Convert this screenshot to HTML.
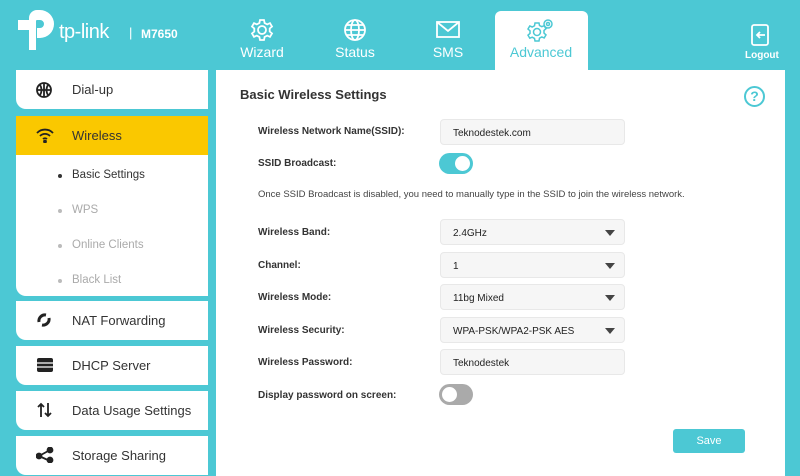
<!DOCTYPE html>
<html><head><meta charset="utf-8"><style>
*{margin:0;padding:0;box-sizing:border-box}
body{width:800px;height:476px;background:#4cc8d4;font-family:"Liberation Sans",sans-serif;position:relative;overflow:hidden;color:#333}
.abs{position:absolute}
.nav{position:absolute;top:18px;width:90px;text-align:center;color:#fff;font-size:14px}
.nav svg{display:block;margin:0 auto 2px}
.side{position:absolute;left:16px;width:192px;background:#fff;border-radius:0 0 0 10px;font-size:13px;color:#333}
.side .t{position:absolute;left:56px;top:12px}
.side .ic{position:absolute;left:20px;top:11px}
.sub{position:absolute;left:56px;font-size:11.5px;color:#aaa}
.sub:before{content:"";position:absolute;left:-14px;top:5px;width:4px;height:4px;border-radius:50%;background:#bbb}
.side .sub:first-child:before{background:#333}
.lbl{position:absolute;left:258px;font-size:10px;font-weight:bold;color:#333}
.fld{position:absolute;left:440px;width:185px;height:26px;background:#f6f6f6;border:1px solid #e8e8e8;border-radius:4px;font-size:10px;color:#222;padding:8px 0 0 12px}
.fld.s:after{content:"";position:absolute;right:9px;top:10px;border-left:5px solid transparent;border-right:5px solid transparent;border-top:6px solid #444}
.tg{position:absolute;left:439px;width:34px;height:21px;border-radius:11px}
.tg i{position:absolute;top:3px;width:15px;height:15px;border-radius:50%;background:#fff}
</style></head><body>
<!-- logo -->
<svg class="abs" style="left:15px;top:10px" width="42" height="42" viewBox="0 0 42 42"><path d="M14 40V20H3V10h11V8a8 8 0 0 1 8-8 h3a14 14 0 0 1 0 28h-3V18h3a4 4 0 0 0 0-8h-3a1 1 0 0 0-1 1v29z" fill="#fff"/></svg>
<div class="abs" style="left:59px;top:21px;color:#fff;font-size:20px;letter-spacing:-0.5px">tp-link</div>
<div class="abs" style="left:129px;top:25px;color:#fff;font-size:13px">|</div>
<div class="abs" style="left:141px;top:27px;color:#fff;font-size:12px;font-weight:bold">M7650</div>
<!-- nav -->
<div class="nav" style="left:217px"><svg width="24" height="24" viewBox="0 0 24 24" fill="none" stroke="#fff" stroke-width="1.8"><circle cx="12" cy="12" r="4"/><path d="M10 2h4l.6 3 2.6 1.4 2.8-1.3 2 3.4-2.3 2 0 3 2.3 2-2 3.4-2.8-1.3-2.6 1.4-.6 3h-4l-.6-3-2.6-1.4-2.8 1.3-2-3.4 2.3-2v-3l-2.3-2 2-3.4 2.8 1.3 2.6-1.4z"/></svg>Wizard</div>
<div class="nav" style="left:310px"><svg width="24" height="24" viewBox="0 0 24 24" fill="none" stroke="#fff" stroke-width="1.8"><circle cx="12" cy="12" r="10"/><ellipse cx="12" cy="12" rx="4" ry="10"/><path d="M2 12h20M4 7h16M4 17h16"/></svg>Status</div>
<div class="nav" style="left:403px"><svg width="24" height="24" viewBox="0 0 24 24" fill="none" stroke="#fff" stroke-width="1.8"><rect x="1" y="4" width="22" height="15"/><path d="M1 4l11 9 11-9"/></svg>SMS</div>
<div class="abs" style="left:495px;top:11px;width:93px;height:60px;background:#fff;border-radius:6px 6px 0 0"></div>
<div class="nav" style="left:496px;color:#4cc8d4"><svg width="30" height="24" viewBox="0 0 30 24" fill="none" stroke="#4cc8d4" stroke-width="1.5"><circle cx="11" cy="14" r="3.5"/><path d="M9 5h4l.5 2.5 2.3 1.2 2.4-1 1.8 3-2 1.8v2.6l2 1.8-1.8 3-2.4-1-2.3 1.2L13 23H9l-.5-2.6-2.3-1.2-2.4 1-1.8-3 2-1.8v-2.6l-2-1.8 1.8-3 2.4 1 2.3-1.2z"/><circle cx="22" cy="6" r="4"/><circle cx="22" cy="6" r="1.5"/></svg>Advanced</div>
<div class="abs" style="left:745px;top:24px;width:30px;text-align:center;color:#fff;font-size:10px;font-weight:bold"><svg width="20" height="22" viewBox="0 0 20 22" fill="none" stroke="#fff" stroke-width="1.8" style="display:block;margin:0 auto 4px"><rect x="2" y="1" width="16" height="20" rx="2"/><path d="M15 11H7M10 8l-3 3 3 3"/></svg>Logout</div>
<!-- sidebar -->
<div class="side" style="top:70px;height:39px"><svg class="ic" width="18" height="18" viewBox="0 0 18 18" fill="none" stroke="#222" stroke-width="1.8"><circle cx="8" cy="9" r="7"/><path d="M1 9h14M8 2v14M4 4c2 3 2 7 0 10M12 4c-2 3-2 7 0 10"/></svg><span class="t">Dial-up</span></div>
<div class="side" style="top:116px;height:39px;background:#fac800;border-radius:0"><svg class="ic" width="18" height="16" viewBox="0 0 18 16" fill="none" stroke="#222" stroke-width="1.8"><path d="M1 6a11 11 0 0 1 16 0M4 9a7 7 0 0 1 10 0M7 12a3 3 0 0 1 4 0"/><circle cx="9" cy="14.5" r="1" fill="#222"/></svg><span class="t">Wireless</span></div>
<div class="side" style="top:155px;height:141px">
<div class="sub" style="top:14px;color:#333">Basic Settings</div>
<div class="sub" style="top:49px">WPS</div>
<div class="sub" style="top:84px">Online Clients</div>
<div class="sub" style="top:119px">Black List</div></div>
<div class="side" style="top:301px;height:39px"><svg class="ic" width="16" height="16" viewBox="0 0 16 16" fill="none" stroke="#222" stroke-width="3"><path d="M3 10a6 6 0 0 1 7-7M13 6a6 6 0 0 1-7 7"/></svg><span class="t">NAT Forwarding</span></div>
<div class="side" style="top:346px;height:39px"><svg class="ic" width="18" height="16" viewBox="0 0 18 16"><rect x="1" y="1" width="16" height="14" rx="2" fill="#222"/><path d="M1 6h16M1 10h16" stroke="#fff" stroke-width="1.2"/></svg><span class="t">DHCP Server</span></div>
<div class="side" style="top:391px;height:39px"><svg class="ic" width="18" height="16" viewBox="0 0 18 16" fill="none" stroke="#222" stroke-width="1.8"><path d="M5 15V2M2 5l3-3 3 3M12 1v13M9 11l3 3 3-3"/></svg><span class="t">Data Usage Settings</span></div>
<div class="side" style="top:436px;height:39px"><svg class="ic" width="18" height="16" viewBox="0 0 18 16" fill="#222" stroke="#222" stroke-width="1.8"><path d="M3 9l11-6M3 9l11 5" fill="none"/><circle cx="3" cy="9" r="2.5"/><circle cx="14" cy="3" r="2.5"/><circle cx="14" cy="13" r="2.5"/></svg><span class="t">Storage Sharing</span></div>
<!-- content -->
<div class="abs" style="left:216px;top:70px;width:569px;height:406px;background:#fff"></div>
<div class="abs" style="left:240px;top:87px;font-size:13px;font-weight:bold;color:#333">Basic Wireless Settings</div>
<div class="abs" style="left:744px;top:86px;width:21px;height:21px;border:2px solid #4cc8d4;border-radius:50%;color:#4cc8d4;font-size:14px;font-weight:bold;text-align:center;line-height:17px">?</div>
<div class="lbl" style="top:126px">Wireless Network Name(SSID):</div>
<div class="fld" style="top:119px">Teknodestek.com</div>
<div class="lbl" style="top:158px">SSID Broadcast:</div>
<div class="tg" style="top:153px;background:#4cc8d4"><i style="left:16px"></i></div>
<div class="abs" style="left:258px;top:189px;font-size:9.5px;color:#444">Once SSID Broadcast is disabled, you need to manually type in the SSID to join the wireless network.</div>
<div class="lbl" style="top:227px">Wireless Band:</div>
<div class="fld s" style="top:219px">2.4GHz</div>
<div class="lbl" style="top:260px">Channel:</div>
<div class="fld s" style="top:252px">1</div>
<div class="lbl" style="top:292px">Wireless Mode:</div>
<div class="fld s" style="top:284px">11bg Mixed</div>
<div class="lbl" style="top:325px">Wireless Security:</div>
<div class="fld s" style="top:317px">WPA-PSK/WPA2-PSK AES</div>
<div class="lbl" style="top:357px">Wireless Password:</div>
<div class="fld" style="top:349px">Teknodestek</div>
<div class="lbl" style="top:390px">Display password on screen:</div>
<div class="tg" style="top:384px;background:#aaa"><i style="left:3px"></i></div>
<div class="abs" style="left:673px;top:429px;width:72px;height:24px;background:#4cc8d4;border-radius:3px;color:#fff;font-size:11px;text-align:center;line-height:24px">Save</div>
</body></html>
